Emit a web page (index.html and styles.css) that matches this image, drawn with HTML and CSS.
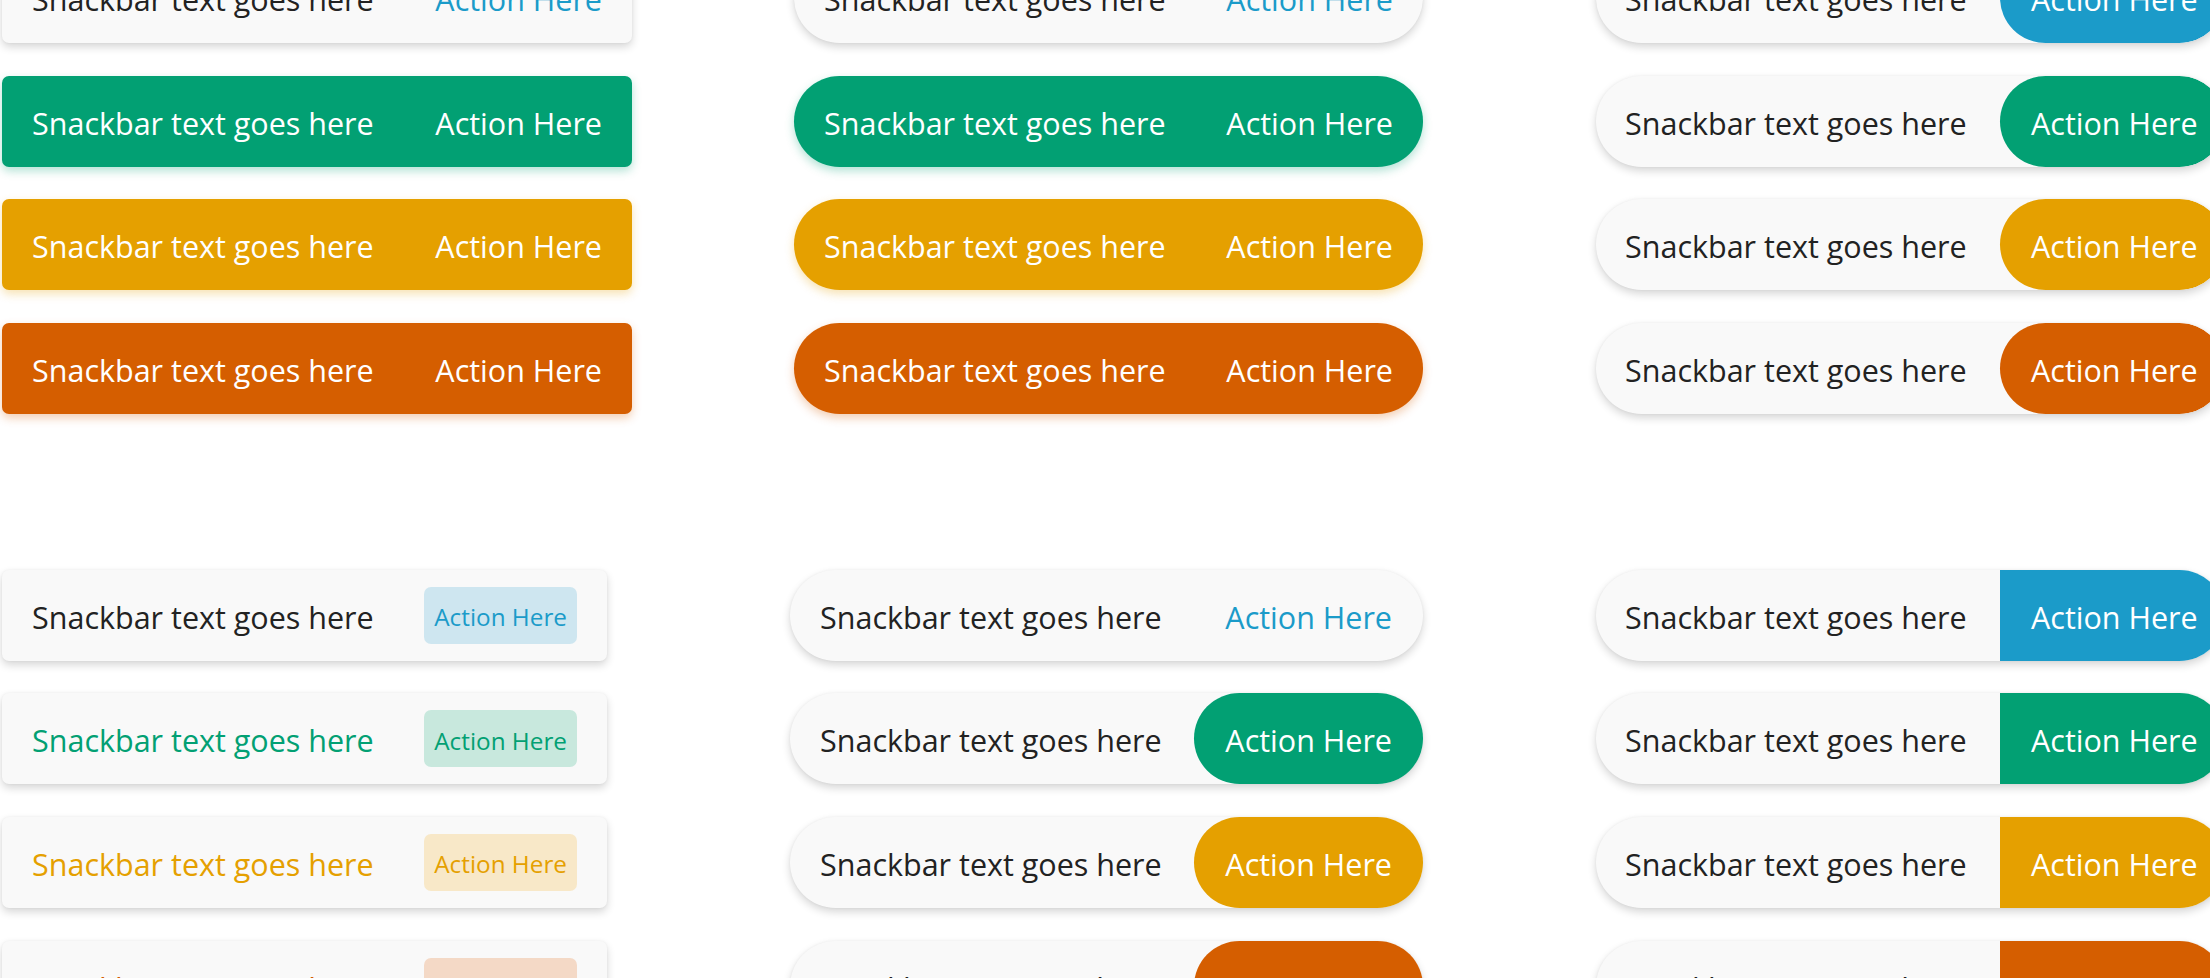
FILE: index.html
```html
<!DOCTYPE html>
<html lang="en">
<head>
<meta charset="utf-8">
<title>Snackbars</title>
<link rel="stylesheet" href="styles.css">
</head>
<body>
<main class="page">
  <section class="group group--top">
    <div class="col col--one">
      <div class="snack snack--square snack--light"><span class="msg">Snackbar text goes here</span><span class="act act--blue-text">Action Here</span></div>
      <div class="snack snack--square snack--green"><span class="msg">Snackbar text goes here</span><span class="act">Action Here</span></div>
      <div class="snack snack--square snack--yellow"><span class="msg">Snackbar text goes here</span><span class="act">Action Here</span></div>
      <div class="snack snack--square snack--orange"><span class="msg">Snackbar text goes here</span><span class="act">Action Here</span></div>
    </div>
    <div class="col col--two">
      <div class="snack snack--pill snack--light"><span class="msg">Snackbar text goes here</span><span class="act act--blue-text">Action Here</span></div>
      <div class="snack snack--pill snack--green"><span class="msg">Snackbar text goes here</span><span class="act">Action Here</span></div>
      <div class="snack snack--pill snack--yellow"><span class="msg">Snackbar text goes here</span><span class="act">Action Here</span></div>
      <div class="snack snack--pill snack--orange"><span class="msg">Snackbar text goes here</span><span class="act">Action Here</span></div>
    </div>
    <div class="col col--three">
      <div class="snack snack--pill snack--light snack--split"><span class="msg">Snackbar text goes here</span><span class="block block--round bg-blue">Action Here</span></div>
      <div class="snack snack--pill snack--light snack--split"><span class="msg">Snackbar text goes here</span><span class="block block--round bg-green">Action Here</span></div>
      <div class="snack snack--pill snack--light snack--split"><span class="msg">Snackbar text goes here</span><span class="block block--round bg-yellow">Action Here</span></div>
      <div class="snack snack--pill snack--light snack--split"><span class="msg">Snackbar text goes here</span><span class="block block--round bg-orange">Action Here</span></div>
    </div>
  </section>

  <section class="group group--bottom">
    <div class="col col--one">
      <div class="snack snack--square snack--light snack--narrow"><span class="msg">Snackbar text goes here</span><span class="chip chip--blue">Action Here</span></div>
      <div class="snack snack--square snack--light snack--narrow"><span class="msg msg--green">Snackbar text goes here</span><span class="chip chip--green">Action Here</span></div>
      <div class="snack snack--square snack--light snack--narrow"><span class="msg msg--yellow">Snackbar text goes here</span><span class="chip chip--yellow">Action Here</span></div>
      <div class="snack snack--square snack--light snack--narrow"><span class="msg msg--orange">Snackbar text goes here</span><span class="chip chip--orange">Action Here</span></div>
    </div>
    <div class="col col--two">
      <div class="snack snack--pill snack--light snack--wide"><span class="msg">Snackbar text goes here</span><span class="pillbtn pillbtn--text">Action Here</span></div>
      <div class="snack snack--pill snack--light snack--wide"><span class="msg">Snackbar text goes here</span><span class="pillbtn bg-green">Action Here</span></div>
      <div class="snack snack--pill snack--light snack--wide"><span class="msg">Snackbar text goes here</span><span class="pillbtn bg-yellow">Action Here</span></div>
      <div class="snack snack--pill snack--light snack--wide"><span class="msg">Snackbar text goes here</span><span class="pillbtn bg-orange">Action Here</span></div>
    </div>
    <div class="col col--three">
      <div class="snack snack--pill snack--light snack--split"><span class="msg">Snackbar text goes here</span><span class="block bg-blue">Action Here</span></div>
      <div class="snack snack--pill snack--light snack--split"><span class="msg">Snackbar text goes here</span><span class="block bg-green">Action Here</span></div>
      <div class="snack snack--pill snack--light snack--split"><span class="msg">Snackbar text goes here</span><span class="block bg-yellow">Action Here</span></div>
      <div class="snack snack--pill snack--light snack--split"><span class="msg">Snackbar text goes here</span><span class="block bg-orange">Action Here</span></div>
    </div>
  </section>
</main>
</body>
</html>
```

FILE: styles.css
```css
html, body {
  margin: 0;
  padding: 0;
  background: #ffffff;
  overflow: hidden;
}

body {
  font-family: "Open Sans", "Liberation Sans", sans-serif;
  font-size: 30.5px;
  color: #222222;
}

.page {
  display: flex;
  flex-direction: column;
  gap: 156px;
  margin-top: -48px;
  padding-left: 2px;
  width: 2240px;
}

.group {
  display: flex;
  align-items: flex-start;
}

.col {
  display: flex;
  flex-direction: column;
  gap: 32.6px;
}

.col--one {
  width: 630px;
  align-items: flex-start;
}

.col--two {
  width: 633px;
  margin-left: 158px;
  align-items: flex-end;
}

.col--three {
  width: 629px;
  margin-left: 173px;
}

.snack {
  box-sizing: border-box;
  height: 91px;
  width: 630px;
  display: flex;
  align-items: center;
  justify-content: space-between;
  padding: 0 30px;
  white-space: nowrap;
  flex-shrink: 0;
}

.msg,
.act {
  padding-top: 3px;
}

.snack--square { border-radius: 7px; }
.snack--pill { border-radius: 46px; width: 629px; }

.snack--light {
  background: #f9f9f9;
  color: #222222;
  box-shadow: 0 4px 9px rgba(0, 0, 0, 0.16), 0 0 3px rgba(0, 0, 0, 0.05);
}

.snack--green {
  background: #02a073;
  color: #ffffff;
  box-shadow: 0 4px 10px rgba(2, 160, 115, 0.3);
}

.snack--yellow {
  background: #e5a000;
  color: #ffffff;
  box-shadow: 0 4px 10px rgba(229, 160, 0, 0.3);
}

.snack--orange {
  background: #d55e00;
  color: #ffffff;
  box-shadow: 0 4px 10px rgba(213, 94, 0, 0.3);
}

.snack--narrow { width: 605px; }

.snack--wide {
  width: 633px;
  padding: 0 0 0 30px;
}

.snack--split {
  padding: 0 0 0 29px;
  overflow: hidden;
}

.act--blue-text { color: #1b9bc9; }

.msg--green { color: #02a073; }
.msg--yellow { color: #e5a000; }
.msg--orange { color: #d55e00; }

.chip {
  box-sizing: border-box;
  height: 57px;
  display: flex;
  align-items: center;
  padding: 3px 10px 0 10px;
  border-radius: 7px;
  font-size: 24.3px;
}

.chip--blue { background: #cee6f0; color: #1b9bc9; }
.chip--green { background: #c8e8dd; color: #02a073; }
.chip--yellow { background: #f8e8c8; color: #e5a000; }
.chip--orange { background: #f4d9c6; color: #d55e00; }

.pillbtn {
  box-sizing: border-box;
  height: 91px;
  display: flex;
  align-items: center;
  padding: 3px 31px 0 31px;
  border-radius: 46px;
  color: #ffffff;
}

.pillbtn--text {
  background: transparent;
  color: #1b9bc9;
}

.block {
  box-sizing: border-box;
  height: 91px;
  width: 225px;
  display: flex;
  align-items: center;
  padding: 3px 0 0 31px;
  color: #ffffff;
}

.block--round { border-radius: 46px; }

.bg-blue { background: #1b9bc9; }
.bg-green { background: #02a073; }
.bg-yellow { background: #e5a000; }
.bg-orange { background: #d55e00; }
```
